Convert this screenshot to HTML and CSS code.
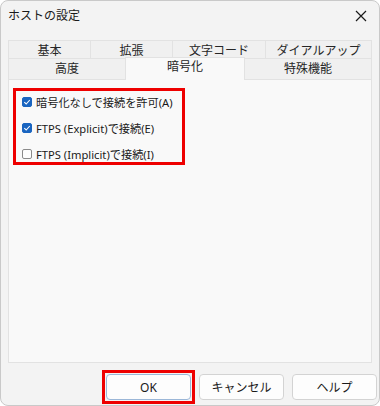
FILE: index.html
```html
<!DOCTYPE html>
<html lang="ja">
<head>
<meta charset="utf-8">
<link rel="stylesheet" href="styles.css">
</head>
<body>
<div class="window">
  <div class="titlebar">
    <span class="title">ホストの設定</span>
    <span class="close"><svg width="12" height="12" viewBox="0 0 12 12"><path d="M1 1L11 11M11 1L1 11" stroke="#1a1a1a" stroke-width="1.2" fill="none"/></svg></span>
  </div>
  <div class="tabs">
    <div class="tabrow row1">
      <div class="tab w1">基本</div>
      <div class="tab w2">拡張</div>
      <div class="tab w3">文字コード</div>
      <div class="tab w4">ダイアルアップ</div>
    </div>
    <div class="tabrow row2">
      <div class="tab w5">高度</div>
      <div class="tab w6 selected">暗号化</div>
      <div class="tab w7">特殊機能</div>
    </div>
  </div>
  <div class="panel">
    <div class="highlight">
      <label class="check"><span class="box on"><svg width="8" height="8" viewBox="0 0 8 8"><path d="M1.3 4.2L3.2 6L6.8 2" stroke="#fff" stroke-width="1.1" fill="none"/></svg></span>暗号化なしで接続を許可(A)</label>
      <label class="check"><span class="box on"><svg width="8" height="8" viewBox="0 0 8 8"><path d="M1.3 4.2L3.2 6L6.8 2" stroke="#fff" stroke-width="1.1" fill="none"/></svg></span>FTPS (Explicit)で接続(E)</label>
      <label class="check"><span class="box"></span>FTPS (Implicit)で接続(I)</label>
    </div>
  </div>
  <div class="buttons">
    <span class="okframe"><button class="btn ok">OK</button></span>
    <button class="btn">キャンセル</button>
    <button class="btn">ヘルプ</button>
  </div>
</div>
</body>
</html>
```
FILE: styles.css
```css
html, body {
  margin: 0;
  padding: 0;
  background: #ffffff;
}
body {
  font-family: "Noto Sans", "Noto Sans CJK JP", sans-serif;
  font-size: 12px;
  color: #1a1a1a;
}
.window {
  width: 380px;
  height: 406px;
  box-sizing: border-box;
  border: 1px solid #c9c9c9;
  border-radius: 8px;
  background: #f3f3f3;
  display: flex;
  flex-direction: column;
  overflow: hidden;
}
.titlebar {
  height: 29px;
  display: flex;
  align-items: center;
  justify-content: space-between;
  padding: 0 12px 0 7px;
}
.title {
  font-size: 12px;
  line-height: 1;
}
.close {
  display: flex;
  width: 12px;
  height: 12px;
}
.tabs {
  margin: 10px 0 0 7px;
  width: 364px;
  display: flex;
  flex-direction: column;
}
.tabrow {
  display: flex;
}
.row1 {
  height: 18px;
}
.row2 {
  height: 21px;
  align-items: flex-end;
}
.tab {
  box-sizing: border-box;
  display: flex;
  align-items: center;
  justify-content: center;
  background: #f0f0f0;
  border: 1px solid #e2e2e2;
  border-bottom: none;
  margin-left: -1px;
  color: #262626;
  font-size: 12px;
  line-height: 1;
}
.tab:first-child {
  margin-left: 0;
}
.row1 .tab {
  height: 18px;
  padding-top: 2px;
}
.row2 .tab {
  height: 21px;
}
.w1 { width: 83px; }
.w2 { width: 83px; }
.w3 { width: 94px; }
.w4 { width: 107px; }
.w5 { width: 118px; }
.w6 { width: 120px; }
.w7 { width: 128px; }
.row2 .tab.selected {
  height: 23px;
  background: #f9f9f9;
  padding-bottom: 4px;
  position: relative;
  z-index: 2;
  margin-bottom: -1px;
  border-color: #e2e2e2;
}
.panel {
  margin-left: 7px;
  width: 364px;
  height: 284px;
  box-sizing: border-box;
  border: 1px solid #e2e2e2;
  background: #f9f9f9;
  padding: 8px 0 0 4px;
}
.highlight {
  width: 172px;
  height: 77px;
  box-sizing: border-box;
  border: 3px solid #ee0000;
  display: flex;
  flex-direction: column;
  padding: 2px 0 0 6px;
  gap: 9px;
}
.check {
  display: flex;
  align-items: center;
  height: 17px;
  gap: 4px;
  font-size: 11.2px;
  color: #1a1a1a;
  white-space: nowrap;
}
.box {
  width: 10px;
  height: 10px;
  box-sizing: border-box;
  border: 1px solid #8a8a8a;
  border-radius: 2px;
  background: #fdfdfd;
  display: flex;
  align-items: center;
  justify-content: center;
}
.box.on {
  background: #1a65c0;
  border-color: #1a65c0;
}
.buttons {
  display: flex;
  gap: 8px;
  padding: 11px 0 0 105px;
}
.okframe {
  display: flex;
  border: 3px solid #ee0000;
  padding: 1px;
  margin: -4px;
}
.btn {
  width: 85px;
  height: 26px;
  box-sizing: border-box;
  border: 1px solid #d3d3d3;
  border-radius: 4px;
  background: #fdfdfd;
  font-family: "Noto Sans", "Noto Sans CJK JP", sans-serif;
  font-size: 12px;
  color: #1a1a1a;
  padding: 0;
}
.btn.ok {
  border-color: #9bb7d8;
}
```
